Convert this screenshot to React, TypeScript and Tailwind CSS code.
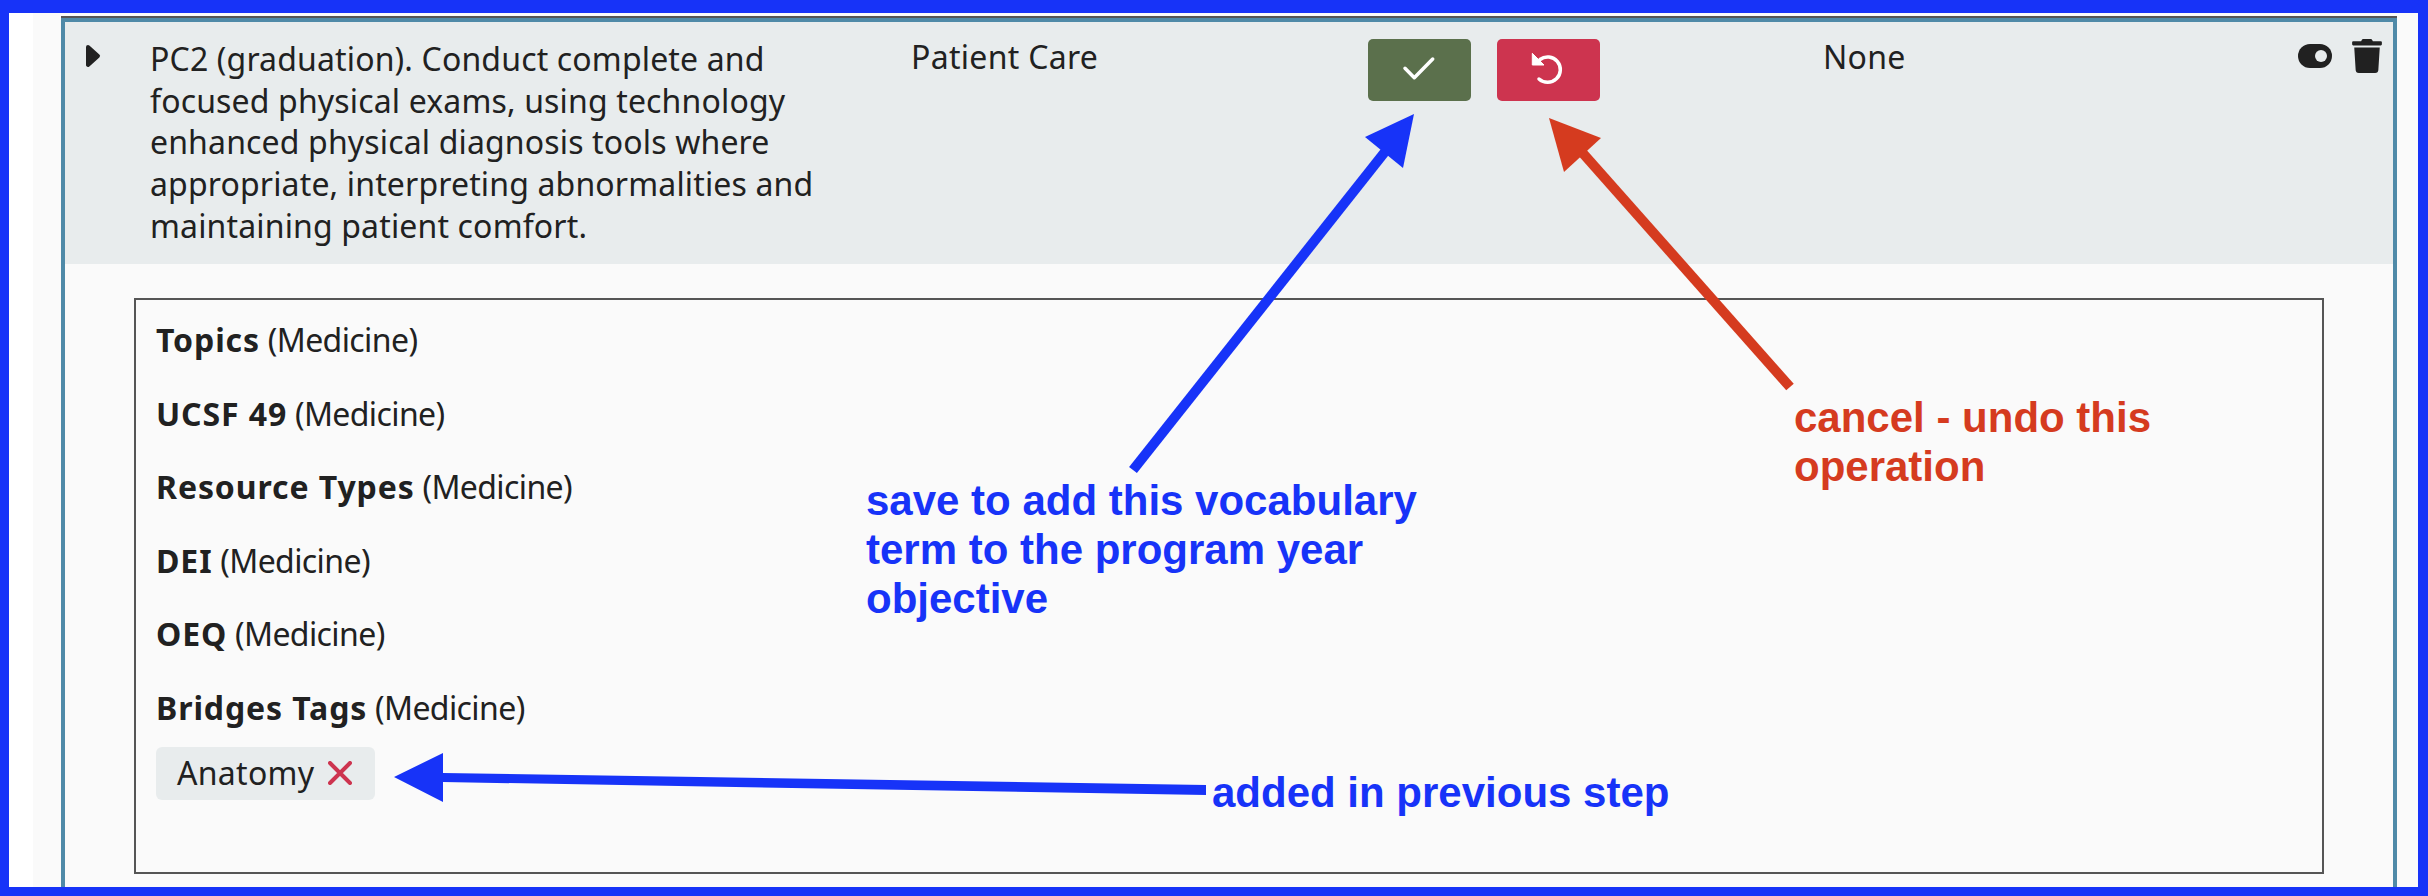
import React from 'react';
import { FaTrash } from 'react-icons/fa';

const vocabularies = [
  { title: 'Topics', school: 'Medicine' },
  { title: 'UCSF 49', school: 'Medicine' },
  { title: 'Resource Types', school: 'Medicine' },
  { title: 'DEI', school: 'Medicine' },
  { title: 'OEQ', school: 'Medicine' },
  { title: 'Bridges Tags', school: 'Medicine' },
];

const Annotations: React.FC = () => (
  <svg className="absolute left-0 top-0" width="2428" height="896" viewBox="0 0 2428 896">
    <line x1="1133" y1="470" x2="1388" y2="148" stroke="#1733f8" strokeWidth="10" />
    <polygon points="1414,114 1365,137 1403,168" fill="#1733f8" />
    <line x1="1790" y1="387" x2="1580" y2="150" stroke="#d53b1f" strokeWidth="10" />
    <polygon points="1549,118 1601,138 1564,172" fill="#d53b1f" />
    <polygon points="1206,785 1206,795 443,782 443,802 394,777 443,753 443,773" fill="#1733f8" />
  </svg>
);

export default function App() {
  return (
    <div className="relative w-[2428px] h-[896px] overflow-hidden bg-[#fafafa] font-['Noto_Sans',sans-serif] text-[#212121]">
      <div className="h-full border-l-[9px] border-t-[13px] border-b-[9px] border-[#1733f8] border-r-[10px] flex">
        <div className="w-[24px] bg-white"></div>
        <div className="w-[28px]"></div>
        <div className="w-[2336px] mt-[3px] border-t-2 border-[#555555]">
          <div className="h-full border-x-4 border-t-4 border-[#4f8aa8] flex flex-col">
            <div className="h-[242px] bg-[#e8eced] flex text-[32px] leading-[41.7px]">
              <div className="w-[85px] pt-[22px] pl-[20px]">
                <svg width="16" height="24" viewBox="0 0 16 24">
                  <path d="M3 3 L13 12 L3 21 Z" fill="#212121" stroke="#212121" strokeWidth="4" strokeLinejoin="round" />
                </svg>
              </div>
              <div className="w-[761px] pt-[16px] pr-[75px] tracking-[0.15px]">
                PC2 (graduation). Conduct complete and focused physical exams, using technology enhanced physical diagnosis tools where appropriate, interpreting abnormalities and maintaining patient comfort.
              </div>
              <div className="w-[457px] pt-[14px] tracking-[0.3px]">Patient Care</div>
              <div className="w-[455px] pt-[17px] flex gap-[26px]">
                <button className="w-[103px] h-[62px] rounded-[5px] bg-[#5b704c]">
                  <svg width="103" height="62" viewBox="0 0 103 62">
                    <path d="M37 29.3 L46.3 38.7 L64.7 20" fill="none" stroke="white" strokeWidth="3.5" strokeLinecap="round" strokeLinejoin="round" />
                  </svg>
                </button>
                <button className="w-[103px] h-[62px] rounded-[5px] bg-[#cd344f]">
                  <svg width="103" height="62" viewBox="0 0 103 62">
                    <path d="M43 20.5 A12.7 12.7 0 1 1 42 40" fill="none" stroke="white" strokeWidth="3.5" strokeLinecap="round" />
                    <path d="M35.3 14.3 L35.3 26 L47 26 Z" fill="white" stroke="white" strokeWidth="1" strokeLinejoin="round" />
                  </svg>
                </button>
              </div>
              <div className="flex-1 pt-[14px] tracking-[0.3px]">None</div>
              <div className="flex gap-[18px] pt-[17px] pr-[9px]">
                <svg className="mt-[5px]" width="34" height="24" viewBox="0 0 34 24">
                  <rect width="34" height="24" rx="12" fill="#212121" />
                  <circle cx="23" cy="12" r="6" fill="#e8eced" />
                </svg>
                <FaTrash className="text-[34px]" />
              </div>
            </div>
            <div className="px-[69px] pt-[34px]">
              <div className="w-[2190px] h-[576px] border-2 border-[#555555] px-[20px] pt-[15px] text-[32px]">
                {vocabularies.map(v => (
                  <p key={v.title} className="h-[73.6px] leading-[50px] tracking-[-0.6px]">
                    <strong className="font-bold tracking-[0.9px]">{v.title}</strong> ({v.school})
                  </p>
                ))}
                <div className="flex w-[219px] items-center gap-[14px] h-[53px] rounded-[6px] bg-[#e8eced] pl-[21px] -mt-[10px] tracking-[0.3px]">
                  Anatomy
                  <svg width="24" height="24" viewBox="0 0 24 24">
                    <path d="M2 2 L22 22 M22 2 L2 22" stroke="#cd344f" strokeWidth="4" strokeLinecap="round" />
                  </svg>
                </div>
              </div>
            </div>
          </div>
        </div>
      </div>
      <Annotations />
      <div className="absolute left-[866px] top-[476px] w-[600px] font-['Liberation_Sans',sans-serif] font-bold text-[42px] leading-[49px] text-[#1733f8]">
        save to add this vocabulary term to the program year objective
      </div>
      <div className="absolute left-[1794px] top-[393px] w-[400px] font-['Liberation_Sans',sans-serif] font-bold text-[42px] leading-[49px] text-[#d53b1f]">
        cancel - undo this operation
      </div>
      <div className="absolute left-[1212px] top-[768px] font-['Liberation_Sans',sans-serif] font-bold text-[42px] leading-[49px] text-[#1733f8]">
        added in previous step
      </div>
    </div>
  );
}
